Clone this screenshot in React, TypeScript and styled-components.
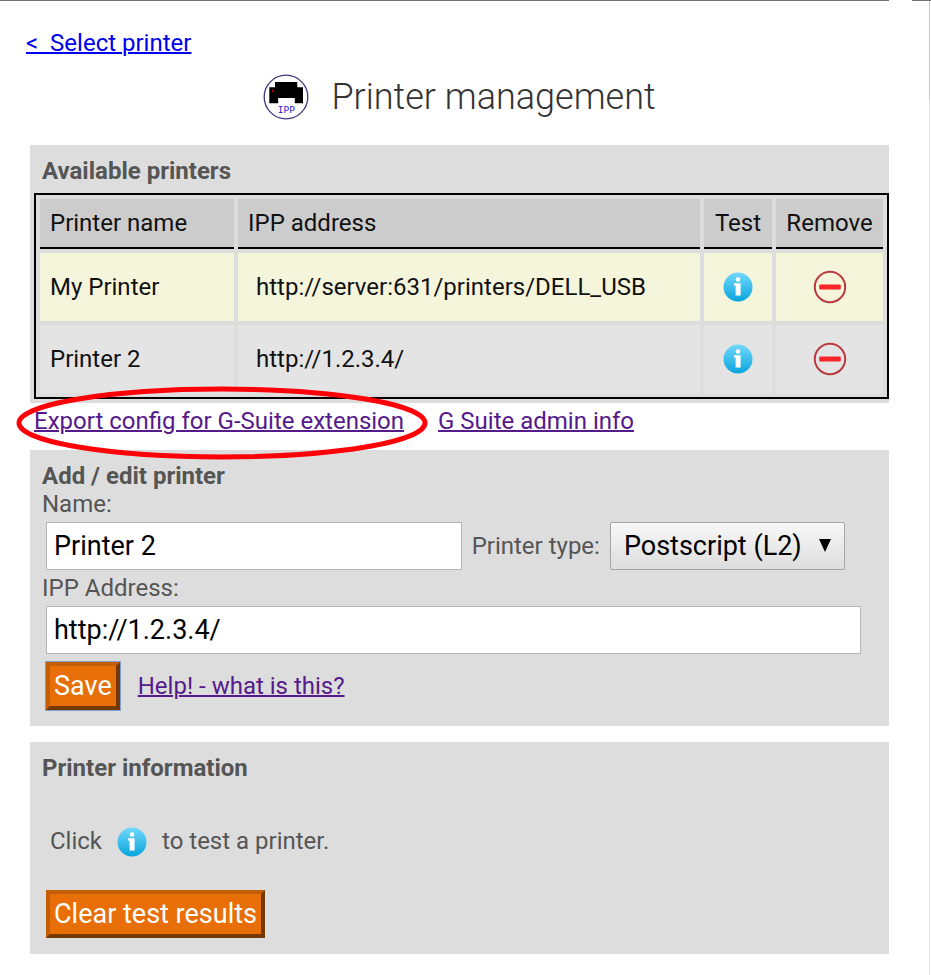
import React, { useState } from "react";
import styled, { createGlobalStyle } from "styled-components";

const GlobalStyle = createGlobalStyle`
  * { box-sizing: border-box; }
  body {
    margin: 0;
    background: #fff;
    color: #555;
    font-family: Roboto, "Liberation Sans", sans-serif;
    font-size: 24px;
    line-height: 28px;
  }
`;

const TopEdge = styled.div`
  display: flex;
  justify-content: space-between;
  &::before { content: ""; height: 1px; flex: 1; background: #737373; margin-right: 23px; }
  &::after { content: ""; height: 1px; width: 19px; background: #737373; }
`;

const Page = styled.main`
  min-height: calc(100vh - 1px);
  margin-right: 1px;
  padding: 28px 40px 20px 30px;
  border-style: solid;
  border-image: linear-gradient(#a9d8e0 0 100px, #e2e2e2 100px) 1;
  border-width: 0 1px 0 0;
`;

const Link = styled.a<{ $fresh?: boolean }>`
  color: ${(p) => (p.$fresh ? "#0000ee" : "#551a8b")};
  text-decoration-thickness: 2px;
  white-space: pre;
`;

const BackRow = styled.nav`
  margin-left: -4px;
`;

const Header = styled.header`
  display: flex;
  align-items: center;
  justify-content: center;
  gap: 22px;
  height: 48px;
  margin: 16px 0 24px;
`;

const Title = styled.h1`
  margin: 0;
  color: #333;
  font-size: 36px;
  font-weight: 300;
  line-height: 44px;
`;

const Panel = styled.section<{ $table?: boolean }>`
  background: #ddd;
  padding: ${(p) => (p.$table ? "12px 0 4px 4px" : "12px 28px 16px 12px")};
`;

const PanelTitle = styled.h2<{ $inset?: boolean }>`
  margin: 0 0 ${(p) => (p.$inset ? "8px" : "0")};
  padding-left: ${(p) => (p.$inset ? "8px" : "0")};
  font-size: 24px;
  font-weight: 700;
  line-height: 28px;
`;

const Table = styled.table`
  width: 100%;
  border: 2px solid #000;
  border-collapse: separate;
  border-spacing: 4px;
  table-layout: fixed;
  color: #111;
`;

const HeadCell = styled.th<{ $width?: number; $center?: boolean }>`
  width: ${(p) => (p.$width ? p.$width + "px" : "auto")};
  height: 50px;
  padding: 0 10px;
  background: #ccc;
  border-bottom: 2px solid #000;
  font-weight: 400;
  text-align: ${(p) => (p.$center ? "center" : "left")};
`;

const Row = styled.tr<{ $active?: boolean }>`
  background: ${(p) => (p.$active ? "#f5f5dc" : "#e4e4e4")};
`;

const Cell = styled.td<{ $kind?: "url" | "icon" }>`
  height: 68px;
  padding: 0 ${(p) => (p.$kind === "url" ? "18px" : p.$kind === "icon" ? "0" : "10px")};
  text-align: ${(p) => (p.$kind === "icon" ? "center" : "left")};
`;

const IconButton = styled.button`
  display: inline-flex;
  padding: 0;
  border: 0;
  background: none;
  vertical-align: middle;
  cursor: pointer;
`;

const LinkRow = styled.div`
  display: flex;
  gap: 34px;
  padding: 4px 4px 15px;
`;

const Circled = styled.span`
  position: relative;
`;

const Ring = styled.svg`
  position: absolute;
  left: -18px;
  top: -21px;
  width: 412px;
  height: 74px;
  pointer-events: none;
`;

const Field = styled.label`
  display: block;
`;

const FieldRow = styled.div`
  display: flex;
  align-items: center;
  gap: 10px;
  padding: 4px 0 4px 4px;
`;

const TextBox = styled.input<{ $share?: string }>`
  width: ${(p) => p.$share ?? "100%"};
  height: 48px;
  padding: 0 7px;
  border: 1px solid #b5b5b5;
  background: #fff;
  color: #000;
  font: 27px/32px Roboto, sans-serif;
  outline: none;
`;

const SelectWrap = styled.span`
  position: relative;
  display: inline-flex;
`;

const Select = styled.select`
  appearance: none;
  height: 48px;
  padding: 0 42px 0 13px;
  border: 1px solid #a6a6a6;
  border-radius: 2px;
  background: linear-gradient(#f8f8f8, #ddd);
  color: #000;
  font: 27px/32px Roboto, sans-serif;
`;

const Arrow = styled.svg`
  position: absolute;
  right: 14px;
  top: 17px;
  pointer-events: none;
`;

const OrangeButton = styled.button<{ $focused?: boolean }>`
  height: 48px;
  padding: 0 4px;
  border: 4px solid;
  border-color: #c45e06 #743803 #743803 #c45e06;
  background: #e86f07;
  color: #fff;
  font: 27px/32px Roboto, sans-serif;
  box-shadow: ${(p) => (p.$focused ? "0 0 0 1px #7f9fd0" : "none")};
`;

const InfoPanel = styled(Panel)`
  margin-top: 16px;
`;

const Hint = styled.p`
  display: flex;
  align-items: center;
  margin: 34px 0 21px;
  padding: 8px;
  gap: 15px;
`;

const HintIcon = styled.span`
  display: flex;
  padding-top: 3px;
`;

const ButtonRow = styled.div`
  display: flex;
  align-items: center;
  gap: 18px;
  padding: 4px 0 0 4px;
`;

function InfoIcon() {
  return (
    <svg width="30" height="30" viewBox="0 0 30 30" aria-hidden="true">
      <defs>
        <linearGradient id="infoFill" x1="0" y1="0" x2="0" y2="1">
          <stop offset="0" stopColor="#73d8fb" />
          <stop offset="1" stopColor="#08a5dc" />
        </linearGradient>
      </defs>
      <circle cx="15" cy="15" r="14.5" fill="url(#infoFill)" />
      <circle cx="15" cy="7.5" r="2.3" fill="#fff" />
      <path d="M11 11.2H17.6V23.4H12.6V13.4H11Z" fill="#fff" />
    </svg>
  );
}

function RemoveIcon() {
  return (
    <svg width="34" height="34" viewBox="0 0 34 34" aria-hidden="true">
      <circle cx="17" cy="17" r="15.2" fill="none" stroke="#b93b40" strokeWidth="2" />
      <rect x="6.2" y="14.6" width="21.6" height="4.8" rx="1" fill="#fb2428" />
    </svg>
  );
}

function Logo() {
  return (
    <svg width="46" height="46" viewBox="0 0 46 46" role="img" aria-label="IPP">
      <circle cx="23" cy="23" r="21.8" fill="#fff" stroke="#3d367c" strokeWidth="1.3" />
      <path d="M12 8H34.3V13.3H40V29.3H31.8V24H15.2V29.3H6.3V13.3H12Z" fill="#000" />
      <rect x="9" y="15.8" width="2" height="2" fill="#c00" />
      <text x="23.3" y="38.6" textAnchor="middle" fontFamily="DejaVu Sans Mono, monospace" fontSize="9.5" fill="#2424c8">IPP</text>
    </svg>
  );
}

const printers = [
  { name: "My Printer", url: "http://server:631/printers/DELL_USB" },
  { name: "Printer 2", url: "http://1.2.3.4/" },
];

export default function App() {
  const [name, setName] = useState("Printer 2");
  const [address, setAddress] = useState("http://1.2.3.4/");

  return (
    <>
      <GlobalStyle />
      <TopEdge />
      <Page>
        <BackRow>
          <Link $fresh href="#select">{"<  Select printer"}</Link>
        </BackRow>
        <Header>
          <Logo />
          <Title>Printer management</Title>
        </Header>

        <Panel $table>
          <PanelTitle $inset>Available printers</PanelTitle>
          <Table>
            <thead>
              <tr>
                <HeadCell $width={194}>Printer name</HeadCell>
                <HeadCell>IPP address</HeadCell>
                <HeadCell $width={68} $center>Test</HeadCell>
                <HeadCell $width={107} $center>Remove</HeadCell>
              </tr>
            </thead>
            <tbody>
              {printers.map((p, i) => (
                <Row key={p.name} $active={i === 0}>
                  <Cell>{p.name}</Cell>
                  <Cell $kind="url">{p.url}</Cell>
                  <Cell $kind="icon">
                    <IconButton aria-label={`Test ${p.name}`}><InfoIcon /></IconButton>
                  </Cell>
                  <Cell $kind="icon">
                    <IconButton aria-label={`Remove ${p.name}`}><RemoveIcon /></IconButton>
                  </Cell>
                </Row>
              ))}
            </tbody>
          </Table>
        </Panel>

        <LinkRow>
          <Circled>
            <Link href="#export">Export config for G-Suite extension</Link>
            <Ring viewBox="0 0 412 74" aria-hidden="true">
              <ellipse cx="206" cy="37" rx="203" ry="34" fill="none" stroke="#ff0008" strokeWidth="5" />
            </Ring>
          </Circled>
          <Link href="#admin">G Suite admin info</Link>
        </LinkRow>

        <Panel>
          <PanelTitle>Add / edit printer</PanelTitle>
          <Field htmlFor="name">Name:</Field>
          <FieldRow>
            <TextBox id="name" $share="51%" value={name} onChange={(e) => setName(e.target.value)} />
            <label htmlFor="type">Printer type:</label>
            <SelectWrap>
              <Select id="type" defaultValue="l2">
                <option value="l2">Postscript (L2)</option>
              </Select>
              <Arrow width="12" height="13" viewBox="0 0 12 13" aria-hidden="true">
                <path d="M0 0H12L6 13Z" fill="#000" />
              </Arrow>
            </SelectWrap>
          </FieldRow>
          <Field htmlFor="address">IPP Address:</Field>
          <FieldRow>
            <TextBox id="address" value={address} onChange={(e) => setAddress(e.target.value)} />
          </FieldRow>
          <ButtonRow>
            <OrangeButton $focused>Save</OrangeButton>
            <Link href="#help">Help! - what is this?</Link>
          </ButtonRow>
        </Panel>

        <InfoPanel>
          <PanelTitle>Printer information</PanelTitle>
          <Hint>
            Click
            <HintIcon><InfoIcon /></HintIcon>
            to test a printer.
          </Hint>
          <ButtonRow>
            <OrangeButton>Clear test results</OrangeButton>
          </ButtonRow>
        </InfoPanel>
      </Page>
    </>
  );
}
